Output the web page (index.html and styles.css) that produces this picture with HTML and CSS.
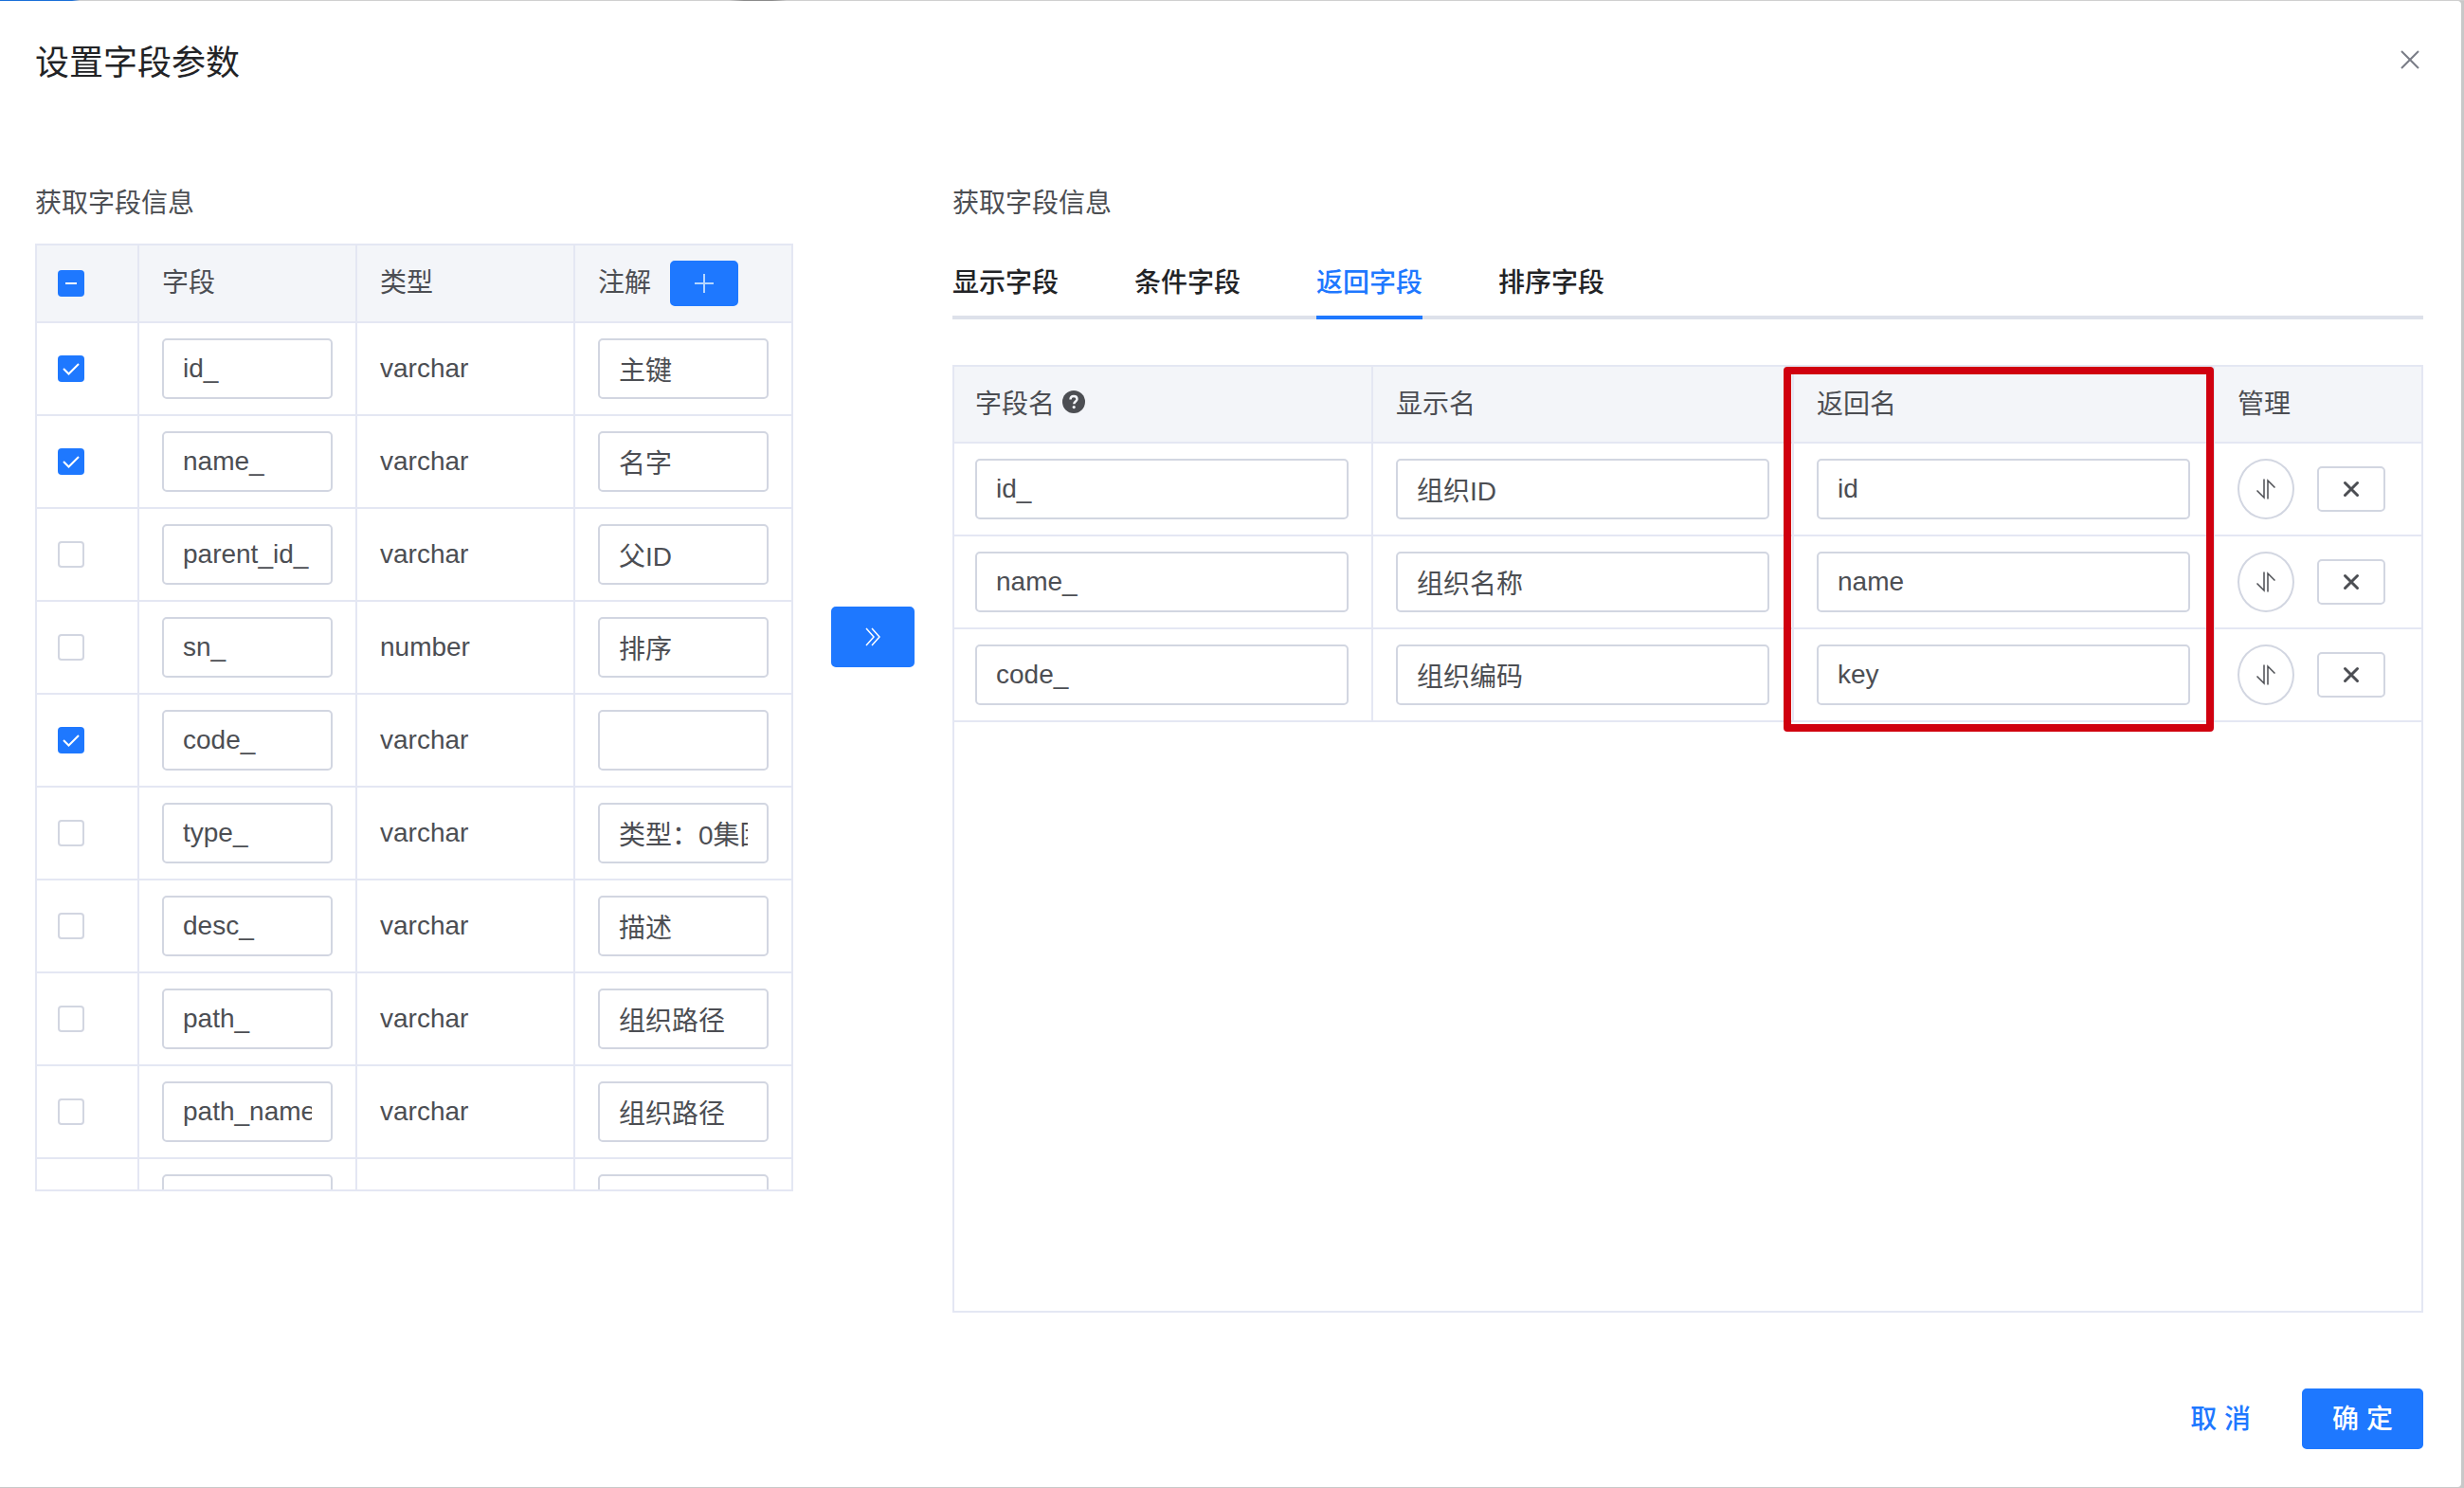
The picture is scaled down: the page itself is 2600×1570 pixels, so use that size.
FILE: index.html
```html
<!DOCTYPE html>
<html lang="zh-CN">
<head>
<meta charset="utf-8">
<title>设置字段参数</title>
<link rel="stylesheet" href="styles.css">
</head>
<body>
<svg class="sprite" aria-hidden="true">
  <symbol id="icon-sort" viewBox="0 0 20 22"><path d="M0.500 12.500L8 20V0.500M12 21.500V2L19.500 9.500" fill="none" stroke="currentColor" stroke-width="1.500"/></symbol>
  <symbol id="icon-remove" viewBox="0 0 18 18"><path d="M2.500 2.500L15.500 15.500M15.500 2.500L2.500 15.500" fill="none" stroke="currentColor" stroke-width="3" stroke-linecap="round"/></symbol>
</svg>
<div class="mask">
  <main class="dialog" role="dialog" aria-labelledby="dialog-title">
    <header class="dialog-header">
      <h1 class="dialog-title" id="dialog-title">设置字段参数</h1>
      <button class="close" type="button" aria-label="关闭">
        <svg width="20" height="20" viewBox="0 0 20 20"><path d="M1 1L19 19M19 1L1 19" fill="none" stroke="currentColor" stroke-width="2"/></svg>
      </button>
    </header>

    <div class="dialog-body">
      <section class="source">
        <h2 class="section-title">获取字段信息</h2>
        <div class="table-box">
          <table class="table source-table">
            <colgroup><col class="col-check"><col><col><col></colgroup>
            <thead>
              <tr>
                <th><input class="check check-partial" type="checkbox" aria-label="全选"></th>
                <th>字段</th>
                <th>类型</th>
                <th>
                  <div class="head-action">注解
                    <button class="btn btn-primary btn-small" type="button" aria-label="添加">
                      <svg width="20" height="20" viewBox="0 0 20 20"><path d="M10 0V20M0 10H20" fill="none" stroke="#b5d6ff" stroke-width="2"/></svg>
                    </button>
                  </div>
                </th>
              </tr>
            </thead>
            <tbody>
              <tr><td><input class="check" type="checkbox" aria-label="选择" checked></td><td><input class="field" type="text" aria-label="字段" value="id_"></td><td>varchar</td><td><input class="field" type="text" aria-label="注解" value="主键"></td></tr>
              <tr><td><input class="check" type="checkbox" aria-label="选择" checked></td><td><input class="field" type="text" aria-label="字段" value="name_"></td><td>varchar</td><td><input class="field" type="text" aria-label="注解" value="名字"></td></tr>
              <tr><td><input class="check" type="checkbox" aria-label="选择"></td><td><input class="field" type="text" aria-label="字段" value="parent_id_"></td><td>varchar</td><td><input class="field" type="text" aria-label="注解" value="父ID"></td></tr>
              <tr><td><input class="check" type="checkbox" aria-label="选择"></td><td><input class="field" type="text" aria-label="字段" value="sn_"></td><td>number</td><td><input class="field" type="text" aria-label="注解" value="排序"></td></tr>
              <tr><td><input class="check" type="checkbox" aria-label="选择" checked></td><td><input class="field" type="text" aria-label="字段" value="code_"></td><td>varchar</td><td><input class="field" type="text" aria-label="注解" value=""></td></tr>
              <tr><td><input class="check" type="checkbox" aria-label="选择"></td><td><input class="field" type="text" aria-label="字段" value="type_"></td><td>varchar</td><td><input class="field" type="text" aria-label="注解" value="类型：0集团"></td></tr>
              <tr><td><input class="check" type="checkbox" aria-label="选择"></td><td><input class="field" type="text" aria-label="字段" value="desc_"></td><td>varchar</td><td><input class="field" type="text" aria-label="注解" value="描述"></td></tr>
              <tr><td><input class="check" type="checkbox" aria-label="选择"></td><td><input class="field" type="text" aria-label="字段" value="path_"></td><td>varchar</td><td><input class="field" type="text" aria-label="注解" value="组织路径"></td></tr>
              <tr><td><input class="check" type="checkbox" aria-label="选择"></td><td><input class="field" type="text" aria-label="字段" value="path_name_"></td><td>varchar</td><td><input class="field" type="text" aria-label="注解" value="组织路径"></td></tr>
              <tr><td><input class="check" type="checkbox" aria-label="选择"></td><td><input class="field" type="text" aria-label="字段" value=""></td><td></td><td><input class="field" type="text" aria-label="注解" value=""></td></tr>
            </tbody>
          </table>
        </div>
      </section>

      <div class="transfer">
        <button class="btn btn-primary btn-transfer" type="button" aria-label="添加到右侧">
          <svg width="18" height="20" viewBox="0 0 18 20"><path d="M2 1L10 10L2 19M8 1L16 10L8 19" fill="none" stroke="currentColor" stroke-width="1.500"/></svg>
        </button>
      </div>

      <section class="target">
        <h2 class="section-title">获取字段信息</h2>
        <div class="tabs" role="tablist">
          <button class="tab" type="button" role="tab" aria-selected="false">显示字段</button>
          <button class="tab" type="button" role="tab" aria-selected="false">条件字段</button>
          <button class="tab tab-active" type="button" role="tab" aria-selected="true">返回字段</button>
          <button class="tab" type="button" role="tab" aria-selected="false">排序字段</button>
        </div>
        <div class="table-box">
          <table class="table target-table">
            <colgroup><col><col><col><col class="col-manage"></colgroup>
            <thead>
              <tr>
                <th>
                  <div class="head-help">字段名
                    <svg class="help-icon" width="24" height="24" viewBox="0 0 24 24" aria-hidden="true"><circle cx="12" cy="12" r="12" fill="#4c4e53"/><path d="M8.500 9.500C8.500 7.200 10 6 12 6S15.500 7.200 15.500 9.200C15.500 11.400 12.300 11.600 12.300 14.200" fill="none" stroke="#f3f5f9" stroke-width="2.400"/><circle cx="12.200" cy="17.600" r="1.600" fill="#f3f5f9"/></svg>
                  </div>
                </th>
                <th>显示名</th>
                <th>返回名</th>
                <th>管理</th>
              </tr>
            </thead>
            <tbody>
              <tr>
                <td><input class="field" type="text" aria-label="字段名" value="id_"></td>
                <td><input class="field" type="text" aria-label="显示名" value="组织ID"></td>
                <td><input class="field" type="text" aria-label="返回名" value="id"></td>
                <td><div class="row-actions"><button class="btn btn-round" type="button" aria-label="移动"><svg width="20" height="22"><use href="#icon-sort"/></svg></button><button class="btn btn-small" type="button" aria-label="删除"><svg width="18" height="18"><use href="#icon-remove"/></svg></button></div></td>
              </tr>
              <tr>
                <td><input class="field" type="text" aria-label="字段名" value="name_"></td>
                <td><input class="field" type="text" aria-label="显示名" value="组织名称"></td>
                <td><input class="field" type="text" aria-label="返回名" value="name"></td>
                <td><div class="row-actions"><button class="btn btn-round" type="button" aria-label="移动"><svg width="20" height="22"><use href="#icon-sort"/></svg></button><button class="btn btn-small" type="button" aria-label="删除"><svg width="18" height="18"><use href="#icon-remove"/></svg></button></div></td>
              </tr>
              <tr>
                <td><input class="field" type="text" aria-label="字段名" value="code_"></td>
                <td><input class="field" type="text" aria-label="显示名" value="组织编码"></td>
                <td><input class="field" type="text" aria-label="返回名" value="key"></td>
                <td><div class="row-actions"><button class="btn btn-round" type="button" aria-label="移动"><svg width="20" height="22"><use href="#icon-sort"/></svg></button><button class="btn btn-small" type="button" aria-label="删除"><svg width="18" height="18"><use href="#icon-remove"/></svg></button></div></td>
              </tr>
            </tbody>
          </table>
          <div class="highlight"></div>
        </div>
      </section>
    </div>

    <footer class="dialog-footer">
      <button class="btn btn-text" type="button">取 消</button>
      <button class="btn btn-primary btn-confirm" type="button">确 定</button>
    </footer>
  </main>
</div>
</body>
</html>
```

FILE: styles.css
```css
:root {
  --blue: #1e78ff;
  --text: #4c4e53;
  --line: #e4e7f3;
  --control: #d2d6e1;
}

* {
  box-sizing: border-box;
}

body {
  margin: 0;
  font-family: "Liberation Sans", "Noto Sans CJK SC", sans-serif;
  font-size: 28px;
  line-height: 42px;
  color: var(--text);
  background: #c8c8c8;
}

button,
input {
  font: inherit;
  color: inherit;
  margin: 0;
}

.sprite {
  display: none;
}

svg {
  display: block;
  flex: none;
}

.mask {
  min-height: 100vh;
  padding: 1px 3px 1px 0;
  background: linear-gradient(90deg, #1a6fd8 0 76px, #cfcfcf 84px 770px, #8a8a8a 785px 815px, #cfcfcf 830px) top / 100% 1px no-repeat;
}

.dialog {
  display: flex;
  flex-direction: column;
  min-height: calc(100vh - 2px);
  padding: 0 40px 40px 37px;
  background: #fff;
  border-radius: 0 4px 4px 0;
}

.dialog-header {
  display: flex;
  justify-content: space-between;
  align-items: center;
  height: 124px;
  margin-bottom: 67px;
}

.dialog-title {
  margin: 0;
  padding-top: 8px;
  font-size: 36px;
  font-weight: 400;
  color: #222326;
}

.close {
  padding: 4px;
  border: 0;
  background: none;
  color: #7a7d87;
}

.dialog-body {
  display: flex;
  gap: 40px;
}

.source {
  flex: 0 0 800px;
}

.target {
  flex: 1;
  min-width: 0;
}

.transfer {
  padding-top: 448px;
}

.section-title {
  margin: 0 0 21px;
  padding-top: 2px;
  font-size: 28px;
  font-weight: 400;
}

.target .section-title {
  margin-bottom: 40px;
}

.tabs {
  display: flex;
  gap: 80px;
  margin-bottom: 48px;
  box-shadow: inset 0 -4px #dde1ea;
}

.tab {
  padding: 2px 0 13px;
  border: 0;
  border-bottom: 4px solid transparent;
  background: none;
  font-weight: 500;
  color: #222326;
}

.tab-active {
  border-bottom-color: var(--blue);
  color: var(--blue);
}

.table-box {
  position: relative;
  height: 1000px;
  overflow: hidden;
  outline: 2px solid var(--line);
  outline-offset: -2px;
}

.table {
  width: 100%;
  table-layout: fixed;
  border-collapse: separate;
  border-spacing: 0;
}

.col-check {
  width: 110px;
}

.col-manage {
  width: 220px;
}

th,
td {
  padding: 16px 24px;
  border-right: 2px solid var(--line);
  border-bottom: 2px solid var(--line);
  text-align: left;
  vertical-align: middle;
  font-weight: 400;
}

td {
  height: 98px;
}

th {
  height: 84px;
  padding-top: 2px;
  padding-bottom: 0;
  background: #f3f5f9;
}

.target-table th {
  height: 83px;
}

tr > :last-child {
  padding-right: 26px;
  border-right: 0;
}

.target-table tr > :last-child {
  padding-right: 0;
}

.head-action {
  display: flex;
  align-items: center;
  gap: 20px;
}

.head-help {
  display: flex;
  align-items: center;
  gap: 8px;
}

.help-icon {
  margin-bottom: 6px;
}

.row-actions {
  display: flex;
  align-items: center;
  gap: 24px;
}

.field {
  display: block;
  width: 100%;
  height: 64px;
  padding: 0 20px;
  border: 2px solid var(--control);
  border-radius: 5px;
  background: #fff;
}

.check {
  appearance: none;
  display: block;
  width: 28px;
  height: 28px;
  border: 2px solid var(--control);
  border-radius: 4px;
  background: #fff;
}

.check:checked,
.check-partial {
  border: 0;
  background: var(--blue) center / 28px 28px no-repeat;
}

.check:checked {
  background-image: url("data:image/svg+xml,%3Csvg xmlns='http://www.w3.org/2000/svg' viewBox='0 0 28 28'%3E%3Cpath d='M6 14L11.500 19.500L22 9' fill='none' stroke='white' stroke-width='2'/%3E%3C/svg%3E");
}

.check-partial {
  background-image: url("data:image/svg+xml,%3Csvg xmlns='http://www.w3.org/2000/svg' viewBox='0 0 28 28'%3E%3Cpath d='M8 14H20' fill='none' stroke='white' stroke-width='2'/%3E%3C/svg%3E");
}

.btn {
  display: flex;
  align-items: center;
  justify-content: center;
  height: 64px;
  padding: 0;
  border: 2px solid var(--control);
  border-radius: 5px;
  background: #fff;
}

.btn-primary {
  border-color: var(--blue);
  background: var(--blue);
  color: #fff;
}

.btn-small {
  width: 72px;
  height: 48px;
}

.btn-round {
  width: 60px;
  border-radius: 50%;
}

.btn-transfer {
  width: 88px;
}

.btn-text {
  padding: 2px 16px 0;
  border: 0;
  background: none;
  font-weight: 500;
  color: var(--blue);
}

.btn-confirm {
  width: 128px;
  padding-top: 2px;
  font-weight: 500;
}

/* Frame around the return-name column */
.highlight {
  position: absolute;
  top: 2px;
  left: calc((100% - 220px) / 3 * 2 - 11px);
  width: calc((100% - 220px) / 3 + 10px);
  height: 385px;
  border: 8px solid #d0000f;
  border-radius: 4px;
}

.dialog-footer {
  display: flex;
  justify-content: flex-end;
  gap: 38px;
  margin-top: 80px;
}
```
